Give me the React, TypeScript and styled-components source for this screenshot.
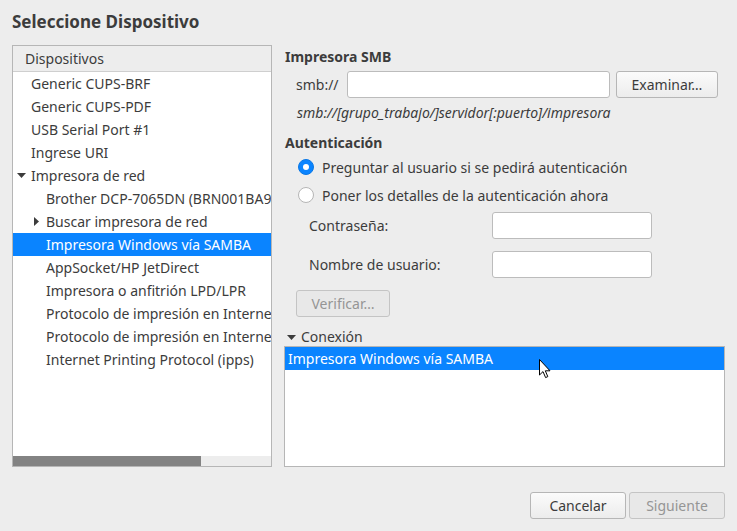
import React from 'react';
import styled, { createGlobalStyle } from 'styled-components';

const GlobalStyle = createGlobalStyle`
  html, body {
    margin: 0;
    padding: 0;
    background: #ededed;
  }
  body {
    font-family: 'Noto Sans', 'DejaVu Sans', sans-serif;
    font-size: 14px;
    color: #3c3c3c;
  }
`;

const Dialog = styled.div`
  width: 737px;
  height: 531px;
  box-sizing: border-box;
  padding: 0 12px;
  display: flex;
  flex-direction: column;
  position: relative;
  overflow: hidden;
`;

const Title = styled.h1`
  margin: 0;
  height: 45px;
  box-sizing: border-box;
  padding-top: 12px;
  font-size: 17px;
  line-height: 20px;
  font-weight: bold;
`;

const Main = styled.div`
  display: flex;
  gap: 12px;
  height: 422px;
`;

const TreePanel = styled.div`
  width: 260px;
  flex-shrink: 0;
  box-sizing: border-box;
  border: 1px solid #b6b6b6;
  background: #fff;
  display: flex;
  flex-direction: column;
  overflow: hidden;
`;

const TreeHeader = styled.div`
  height: 26px;
  box-sizing: border-box;
  border-bottom: 1px solid #cfcfcf;
  background: #ededed;
  padding-left: 12px;
  line-height: 26px;
`;

const TreeBody = styled.div`
  flex: 1;
  overflow: hidden;
`;

const TreeRow = styled.div<{ $level: number; $selected?: boolean }>`
  height: 23px;
  line-height: 23px;
  white-space: nowrap;
  display: flex;
  align-items: center;
  overflow: hidden;
  padding-left: ${({ $level }) => ($level === 1 ? 4 : 19)}px;
  background: ${({ $selected }) => ($selected ? '#0a84ff' : 'transparent')};
  color: ${({ $selected }) => ($selected ? '#fff' : '#3c3c3c')};
`;

const Expander = styled.span<{ $shift: number }>`
  width: 14px;
  box-sizing: border-box;
  padding-left: ${({ $shift }) => $shift}px;
  display: inline-flex;
  align-items: center;
  flex-shrink: 0;
`;

const ScrollTrack = styled.div`
  height: 10px;
  background: #ededed;
  display: flex;
`;

const ScrollThumb = styled.div`
  width: 188px;
  background: #838383;
`;

const Side = styled.div`
  flex: 1;
  display: flex;
  flex-direction: column;
`;

const SectionTitle = styled.div<{ $h: number; $lh: number }>`
  font-weight: bold;
  height: ${({ $h }) => $h}px;
  line-height: ${({ $lh }) => $lh}px;
  padding-left: 1px;
`;

const SmbRow = styled.div`
  margin-top: 2px;
  height: 27px;
  display: flex;
  align-items: center;
  gap: 6px;
  padding-left: 12px;
`;

const SmbLabel = styled.span`
  width: 45px;
`;

const TextInput = styled.div<{ $width: number }>`
  width: ${({ $width }) => $width}px;
  height: 27px;
  box-sizing: border-box;
  background: #fff;
  border: 1px solid #bcbcbc;
  border-radius: 3px;
`;

const Button = styled.button<{ $width: number; $disabled?: boolean }>`
  width: ${({ $width }) => $width}px;
  height: 27px;
  box-sizing: border-box;
  border: 1px solid ${({ $disabled }) => ($disabled ? '#c4c4c4' : '#b6b6b6')};
  border-radius: 3px;
  background: ${({ $disabled }) =>
    $disabled ? '#e8e8e8' : 'linear-gradient(#fbfbfb, #ececec)'};
  color: ${({ $disabled }) => ($disabled ? '#959595' : '#3c3c3c')};
  font-family: inherit;
  font-size: 14px;
  padding: 0;
  flex-shrink: 0;
`;

const Hint = styled.div`
  height: 30px;
  line-height: 30px;
  padding-left: 13px;
  font-style: italic;
`;

const RadioRow = styled.div`
  height: 28px;
  display: flex;
  align-items: center;
  padding-left: 14px;
  gap: 8px;
`;

const Radio = styled.span<{ $checked?: boolean }>`
  width: 16px;
  height: 16px;
  box-sizing: border-box;
  border-radius: 50%;
  display: inline-flex;
  align-items: center;
  justify-content: center;
  background: ${({ $checked }) => ($checked ? '#0a84ff' : '#fff')};
  border: 1px solid ${({ $checked }) => ($checked ? '#0a78e6' : '#b6b6b6')};

  &::after {
    content: '';
    width: 6px;
    height: 6px;
    border-radius: 50%;
    background: #fff;
    display: ${({ $checked }) => ($checked ? 'block' : 'none')};
  }
`;

const CredGrid = styled.div`
  margin-top: 3px;
  display: grid;
  grid-template-columns: 183px 160px;
  row-gap: 12px;
  align-items: center;
  padding-left: 25px;
`;

const VerifyRow = styled.div`
  margin-top: 12px;
  padding-left: 12px;
  display: flex;
`;

const ConnHeader = styled.div`
  height: 29px;
  box-sizing: border-box;
  padding-top: 11px;
  line-height: 18px;
  display: flex;
  align-items: center;
  gap: 5px;
  padding-left: 3px;
`;

const ConnBox = styled.div`
  flex: 1;
  box-sizing: border-box;
  border: 1px solid #b6b6b6;
  background: #fff;
`;

const ConnRow = styled.div`
  height: 23px;
  line-height: 23px;
  padding-left: 3px;
  background: #0a84ff;
  color: #fff;
`;

const Footer = styled.div`
  margin-top: 25px;
  display: flex;
  justify-content: flex-end;
  gap: 3px;
`;

const Cursor = styled.svg`
  position: absolute;
  left: 539px;
  top: 359px;
`;

function DownArrow() {
  return (
    <svg width="9" height="5" viewBox="0 0 9 5">
      <path d="M0 0 L9 0 L4.5 5 Z" fill="#3c3c3c" />
    </svg>
  );
}

function RightArrow() {
  return (
    <svg width="5" height="9" viewBox="0 0 5 9">
      <path d="M0 0 L5 4.5 L0 9 Z" fill="#3c3c3c" />
    </svg>
  );
}

type Item = { label: string; level: number; expander?: 'open' | 'closed'; selected?: boolean };

const items: Item[] = [
  { label: 'Generic CUPS-BRF', level: 1 },
  { label: 'Generic CUPS-PDF', level: 1 },
  { label: 'USB Serial Port #1', level: 1 },
  { label: 'Ingrese URI', level: 1 },
  { label: 'Impresora de red', level: 1, expander: 'open' },
  { label: 'Brother DCP-7065DN (BRN001BA9A1B2C3)', level: 2 },
  { label: 'Buscar impresora de red', level: 2, expander: 'closed' },
  { label: 'Impresora Windows vía SAMBA', level: 2, selected: true },
  { label: 'AppSocket/HP JetDirect', level: 2 },
  { label: 'Impresora o anfitrión LPD/LPR', level: 2 },
  { label: 'Protocolo de impresión en Internet (ipp)', level: 2 },
  { label: 'Protocolo de impresión en Internet (http)', level: 2 },
  { label: 'Internet Printing Protocol (ipps)', level: 2 },
];

export default function App() {
  return (
    <>
      <GlobalStyle />
      <Dialog>
        <Title>Seleccione Dispositivo</Title>
        <Main>
          <TreePanel>
            <TreeHeader>Dispositivos</TreeHeader>
            <TreeBody>
              {items.map((it) => (
                <TreeRow key={it.label} $level={it.level} $selected={it.selected}>
                  <Expander $shift={it.expander === 'closed' ? 2 : 0}>
                    {it.expander === 'open' && <DownArrow />}
                    {it.expander === 'closed' && <RightArrow />}
                  </Expander>
                  {it.label}
                </TreeRow>
              ))}
            </TreeBody>
            <ScrollTrack>
              <ScrollThumb />
            </ScrollTrack>
          </TreePanel>
          <Side>
            <SectionTitle $h={24} $lh={24}>Impresora SMB</SectionTitle>
            <SmbRow>
              <SmbLabel>smb://</SmbLabel>
              <TextInput $width={263} />
              <Button $width={102}>Examinar…</Button>
            </SmbRow>
            <Hint>smb://[grupo_trabajo/]servidor[:puerto]/impresora</Hint>
            <SectionTitle $h={25} $lh={30}>Autenticación</SectionTitle>
            <RadioRow>
              <Radio $checked />
              Preguntar al usuario si se pedirá autenticación
            </RadioRow>
            <RadioRow>
              <Radio />
              Poner los detalles de la autenticación ahora
            </RadioRow>
            <CredGrid>
              <span>Contraseña:</span>
              <TextInput $width={160} />
              <span>Nombre de usuario:</span>
              <TextInput $width={160} />
            </CredGrid>
            <VerifyRow>
              <Button $width={94} $disabled>Verificar…</Button>
            </VerifyRow>
            <ConnHeader>
              <DownArrow />
              Conexión
            </ConnHeader>
            <ConnBox>
              <ConnRow>Impresora Windows vía SAMBA</ConnRow>
            </ConnBox>
          </Side>
        </Main>
        <Footer>
          <Button $width={96}>Cancelar</Button>
          <Button $width={96} $disabled>Siguiente</Button>
        </Footer>
        <Cursor width="12" height="20" viewBox="0 0 12 20">
          <path
            d="M0.5 0.5 L0.5 16 L4 12.6 L6.6 18.6 L8.8 17.6 L6.3 11.8 L11 11.8 Z"
            fill="#fff"
            stroke="#000"
            strokeWidth="1"
            strokeLinejoin="round"
          />
        </Cursor>
      </Dialog>
    </>
  );
}
